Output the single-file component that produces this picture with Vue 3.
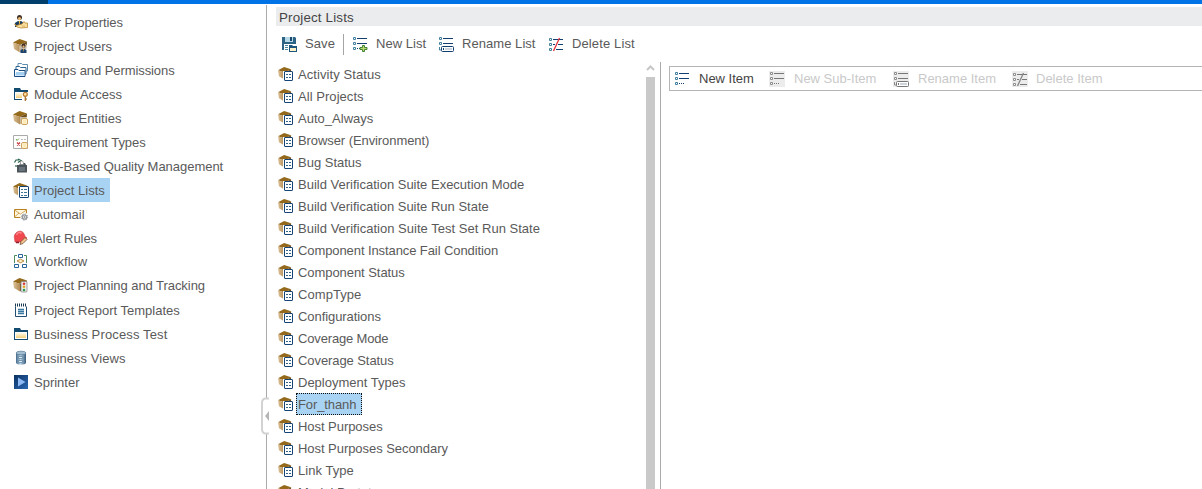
<script setup>
const nav = [
  ['User Properties', 'user', 24, -0.1], ['Project Users', 'boxuser', 24], ['Groups and Permissions', 'groups', 24, -0.08],
  ['Module Access', 'access', 24, 0.05], ['Project Entities', 'entities', 24, 0.05], ['Requirement Types', 'req', 24, -0.05],
  ['Risk-Based Quality Management', 'risk', 24, -0.03], ['Project Lists', 'boxlist', 24], ['Automail', 'mail', 24],
  ['Alert Rules', 'alert', 24, -0.05], ['Workflow', 'flow', 22], ['Project Planning and Tracking', 'plan', 26, -0.06],
  ['Project Report Templates', 'report', 24], ['Business Process Test', 'folder', 24, 0.14],
  ['Business Views', 'db', 24, 0.05], ['Sprinter', 'sprint', 24],
]
const lists = [['Activity Status', 0.08], ['All Projects', 0.05], ['Auto_Always', 0.02], ['Browser (Environment)', -0.08], ['Bug Status'],
  ['Build Verification Suite Execution Mode'], ['Build Verification Suite Run State'],
  ['Build Verification Suite Test Set Run State', 0.02], ['Component Instance Fail Condition', -0.09], ['Component Status', -0.06],
  ['CompType', 0.06], ['Configurations', -0.07], ['Coverage Mode', -0.16], ['Coverage Status', -0.08], ['Deployment Types'], ['For_thanh', -0.1],
  ['Host Purposes', -0.05], ['Host Purposes Secondary', -0.05], ['Link Type', 0.05], ['Model Prototype']]
</script>

<template>
  <div class="page">
    <svg class="defs" width="0" height="0">
      <defs>
        <linearGradient id="gold" x1="0" y1="0" x2="0" y2="1"><stop offset="0" stop-color="#fffbe8" /><stop offset="1" stop-color="#f3cf7a" /></linearGradient>
        <linearGradient id="navy" x1="0" y1="0" x2="1" y2="1"><stop offset="0" stop-color="#0a3160" /><stop offset="1" stop-color="#2a68b4" /></linearGradient>
        <linearGradient id="steel"><stop offset="0" stop-color="#456a8b" /><stop offset=".45" stop-color="#b9d4e6" /><stop offset="1" stop-color="#36597a" /></linearGradient>
        <linearGradient id="wood"><stop offset="0" stop-color="#dcc196" /><stop offset="1" stop-color="#b28c55" /></linearGradient>
        <symbol id="box" viewBox="0 0 16 16">
          <path d="M0 4.500 6.500 1 14 3.500 7 7z" fill="#94691c" />
          <path d="M0 4.500 7 7v7.500L1 11z" fill="url(#wood)" />
          <path d="m7 7 7-3.500-.5 7L7 14.500z" fill="#6f4e1c" />
        </symbol>
        <symbol id="boxlist" viewBox="0 0 16 16">
          <use href="#box" width="16" height="16" />
          <path d="M5 4h11v12H5z" fill="#fff" />
          <rect x="6.500" y="4.500" width="9" height="11" rx=".5" fill="#fff" stroke="#154474" />
          <path d="M8 7.500h2m1 0h3M8 10.500h2m1 0h3M8 13.500h2m1 0h3" stroke="#3d7596" />
        </symbol>
        <symbol id="rowbox" viewBox="0 0 16 16">
          <use href="#box" width="15" height="15" />
          <path d="M5 5h9v10H5z" fill="#fff" />
          <rect x="6.500" y="5.500" width="8" height="9" rx=".5" fill="#fff" stroke="#154474" />
          <path d="M8 8.500h2m1 0h2M8 11.500h2m1 0h2" stroke="#2f6488" />
        </symbol>
        <symbol id="boxuser" viewBox="0 0 16 16">
          <use href="#box" width="16" height="16" />
          <path d="M6.500 15V8l2-2h4l2 2v7z" fill="#fff" opacity=".6" />
          <circle cx="10.500" cy="7.800" r="2" fill="#3c2a1b" /><circle cx="10.500" cy="8.600" r="1.100" fill="#e7b780" />
          <path d="M7.500 15v-3l2-1h2l2 1v3z" fill="#1c446c" /><path d="m10 11 .5 3 .5-3z" fill="#efb03b" />
        </symbol>
        <symbol id="user" viewBox="0 0 16 16">
          <circle cx="6.500" cy="3.500" r="2.500" fill="#3d3024" /><circle cx="6.500" cy="4.600" r="1.600" fill="#e9b671" />
          <path d="M2 13V9l3-2h3l3 2v4z" fill="#173c63" /><path d="m5.700 7 .8 5 .8-5z" fill="#efb83f" />
          <path d="m1.500 10 2 1.500L9 10l2-2.500 1 1.500h2.500v4.500L8 14l-4-1z" fill="#f9dd9c" stroke="#bd8a32" stroke-width=".8" /><path d="m9 12 3 .2" stroke="#d6ab61" stroke-width=".8" />
        </symbol>
        <symbol id="groups" viewBox="0 0 16 16">
          <path d="M5 7V1.500h3.500l1 1H14.500V9h-2" fill="#fff" stroke="#5f8dae" />
          <path d="M3 9V4.500h3.500l1 1H13V12h-2" fill="#fff" stroke="#2e6795" />
          <path d="M1.500 14.500v-7H5l1 1h6v6z" fill="#fff" stroke="#174d84" /><path d="M3 10h8v3.500H2.500z" fill="#a5d0f0" />
        </symbol>
        <symbol id="folder" viewBox="0 0 16 16">
          <path d="M1 2h6l1 2h7v10H1z" fill="#124a70" /><path d="M2 6h12v7H2z" fill="#fff" /><path d="M3 7h10v5H3z" fill="url(#gold)" />
        </symbol>
        <symbol id="access" viewBox="0 0 16 16">
          <use href="#folder" width="16" height="16" />
          <path d="M9 6h7v10H9z" fill="#fff" /><circle cx="12.300" cy="8.300" r="2" fill="#ffe0a2" stroke="#b67b30" stroke-width="1.200" />
          <path d="M12.300 10.500V15m0-2h1.500" stroke="#a8702a" stroke-width="1.300" />
        </symbol>
        <symbol id="tag" viewBox="0 0 16 16"><rect x="8.500" y="8.500" width="6" height="6" rx="1.500" fill="#fff5dc" stroke="#cda35b" /><path d="M10 9.500h3v4h-3z" fill="#ffe9b5" /></symbol>
        <symbol id="entities" viewBox="0 0 16 16">
          <use href="#box" width="16" height="16" /><path d="M7 7h9v9H7z" fill="#fff" opacity=".6" /><use href="#tag" width="16" height="16" />
        </symbol>
        <symbol id="req" viewBox="0 0 16 16">
          <path d="M.5 1.500h14v13H.5z" fill="#fff" stroke="#aaa" /><path d="m3 5 1 1.500 2-2" fill="none" stroke="#64a04a" /><path d="m4 8.500 3 3m0-3-3 3" stroke="#c23c43" stroke-width="1.200" /><path d="M8 5.500h5" stroke="#bbb" stroke-dasharray="2 1" /><use href="#tag" width="16" height="16" />
        </symbol>
        <symbol id="risk" viewBox="0 0 16 16">
          <path d="M4 7h2l2-2h4l1 2h1v7.500H4z" fill="#4c545b" /><path d="M6 9h6v4H6z" fill="#69737b" /><path d="M1.500 4.500 3 2h3M5 1l3 1.500L5 4.500M3 7v2" fill="none" stroke="#27634b" stroke-width="1.200" /><path d="M7.500 6.500V3h2l1 2v1.500z" fill="#fff" stroke="#777" stroke-width=".6" />
        </symbol>
        <symbol id="mail" viewBox="0 0 16 16">
          <path d="M1.500 3.500h12v8h-12z" fill="#fff8df" stroke="#b98122" /><path d="m1.500 4 6 4 6-4M1.500 11 6 7" fill="none" stroke="#cf9d4d" stroke-width=".9" /><circle cx="11.500" cy="11" r="4.200" fill="#fff" /><circle cx="11.500" cy="11" r="2.200" fill="#eee" stroke="#92979b" stroke-width="1.300" /><circle cx="11.500" cy="11" r="3.200" fill="none" stroke="#92979b" stroke-dasharray="1.200 1.300" /><circle cx="11.500" cy="11" r=".8" fill="#777" />
        </symbol>
        <symbol id="alert" viewBox="0 0 16 16">
          <path d="M2 12c0-3-2-6 1-9s7-2 8 1c1 2 1 3 3 4l-4 4z" fill="#f0484d" stroke="#c93b44" stroke-width=".7" /><path d="M3.500 5c1-3 4-3 5-1.500" fill="none" stroke="#ff858c" stroke-width="1.500" /><path d="M3 12.500h3" stroke="#84212c" stroke-width="1.500" /><path d="m7 14.500 1-3 4-4 2 2-4 4z" fill="#f0c28a" stroke="#755239" stroke-width=".8" />
        </symbol>
        <symbol id="flow" viewBox="0 0 16 16">
          <path d="M5.500 1.500h4v3h-4zM1.500 11.500h4v3h-4zm8 0h4v3h-4z" fill="#fff" stroke="#286596" /><path d="m4 8 3.500-1.800L11 8 7.500 9.800z" fill="#fff1c7" stroke="#b98b43" /><path d="M4 2.500H1.500V10M11 2.500h2.500V10" fill="none" stroke="#4c8e5b" />
        </symbol>
        <symbol id="plan" viewBox="0 0 16 16">
          <use href="#box" width="16" height="16" /><rect x="8" y="4.500" width="6" height="10.500" rx="1" fill="#eee" stroke="#888" stroke-width=".8" /><circle cx="11" cy="6.700" r="1.300" fill="#d9393c" /><circle cx="11" cy="9.800" r="1.300" fill="#e6a41c" /><circle cx="11" cy="13" r="1.300" fill="#2b9c4b" />
        </symbol>
        <symbol id="report" viewBox="0 0 16 16">
          <path d="M2.500 3.500h11v11h-11z" fill="#fff" stroke="#244d72" /><path d="M2 1h12v3.500H2z" fill="#fff" /><path d="M2.500 1.500v3m2-3v3m2-3v3m2-3v3m2-3v3m2-3v3" stroke="#193955" /><path d="M5 7.500h6m-6 2h6m-6 2h6" stroke="#3979a3" stroke-width="1.300" />
        </symbol>
        <symbol id="db" viewBox="0 0 16 16">
          <path d="M3 3v9.500c0 3 10 3 10 0V3z" fill="url(#steel)" /><ellipse cx="8" cy="3" rx="5" ry="1.800" fill="#a3bed0" stroke="#537690" stroke-width=".7" /><path d="M5.500 6.500h4v2h-4zm0 4h4v2h-4z" fill="#dceaf3" stroke="#6387a2" stroke-width=".8" />
        </symbol>
        <symbol id="sprint" viewBox="0 0 16 16"><path d="M1 1h14v14H1z" fill="url(#navy)" /><path d="m5 3.500 7.500 4.500L5 12.500z" fill="#8eb9f5" /></symbol>
        <symbol id="save" viewBox="0 0 16 16">
          <path d="M1 1h13l1 1v12H1z" fill="#2d6384" /><path d="M4 1h8v5H4z" fill="#b8d9e7" /><path d="M9 1h2v4H9z" fill="#194a70" /><path d="M3 8h11v7H3z" fill="#fff" /><path d="M4 9.500h6m-6 2h3m-3 2h3" stroke="#49839e" /><path d="M7 8h9v8H7z" fill="#fff" /><path d="M8 9h3l1 1h4v6H8z" fill="#1c567e" /><path d="M9 12h6v3H9z" fill="#fff2c9" />
        </symbol>
        <symbol id="rows" viewBox="0 0 16 16">
          <path d="M1.500 1.500h2v2h-2zm0 5h2v2h-2z" fill="#fff" stroke="var(--sq)" /><path d="M5 2.500h10M5 7.500h10" stroke="var(--ln)" />
        </symbol>
        <symbol id="item" viewBox="0 0 16 16"><use href="#rows" width="16" height="16" /><path d="M1.500 11.500h2v2h-2z" fill="#fff" stroke="var(--sq)" /><path d="M5 12.500h1m1 0h1m1 0h1" stroke="var(--ln)" /></symbol>
        <symbol id="new" viewBox="0 0 16 16"><use href="#item" width="16" height="16" /><path d="M10.500 9.500h2v2H15v2h-2.500v2h-2v-2H8v-2h2.500z" fill="#b8d976" stroke="#45822f" /></symbol>
        <symbol id="rename" viewBox="0 0 16 16"><use href="#rows" width="16" height="16" /><path d="M1.500 11v3H3" fill="none" stroke="var(--sq)" /><rect x="3.500" y="10.500" width="12" height="5" rx="1" fill="#fff" stroke="var(--ln)" /><path d="M5.500 12v2" stroke="var(--ln)" /><path d="M7 13h7" stroke="#cdd4dc" stroke-width="2" /></symbol>
        <symbol id="delete" viewBox="0 0 16 16"><path d="M1.500 2.500h2v2h-2zm0 5h2v2h-2zm0 5h2v2h-2z" fill="#fff" stroke="var(--sq)" /><path d="M5 3.500h10M5 8.500h2m3 0h5M8 13.500h7" stroke="var(--ln)" /><path d="M11.500 2 5.500 15" stroke="var(--cut)" stroke-width="1.300" /></symbol>
      </defs>
    </svg>
    <header class="top"><i></i></header>
    <div class="body">
      <nav class="side">
        <div v-for="n in nav" :key="n[0]" class="nav" :style="{ height: n[2] + 'px' }">
          <svg class="ic"><use :href="'#' + n[1]" /></svg><span :class="{ sel: n[1] === 'boxlist' }" :style="{ letterSpacing: (n[3] || 0) + 'px' }">{{ n[0] }}</span>
        </div>
      </nav>
      <main class="main">
        <h1>Project Lists</h1>
        <div class="tools">
          <svg class="ic"><use href="#save" /></svg><span class="t1">Save</span><b class="sep"></b>
          <svg class="ic"><use href="#new" /></svg><span class="t2">New List</span>
          <svg class="ic"><use href="#rename" /></svg><span class="t3">Rename List</span>
          <svg class="ic"><use href="#delete" /></svg><span class="t4">Delete List</span>
        </div>
        <div class="panes">
          <div class="list">
            <div v-for="l in lists" :key="l[0]" class="row">
              <svg class="ic"><use href="#rowbox" /></svg><span :class="{ focus: l[0] === 'For_thanh' }" :style="{ letterSpacing: (l[1] || 0) + 'px' }">{{ l[0] }}</span>
            </div>
          </div>
          <div class="scroll"><svg width="9" height="6"><path d="M1 5 4.500 1.500 8 5" fill="none" stroke="#c6c6c6" stroke-width="2" /></svg><i></i></div>
          <section class="detail">
            <div class="itembar">
              <svg class="ic"><use href="#item" /></svg><span class="i1">New Item</span>
              <svg class="ic off"><use href="#item" /></svg><span class="i2 dim">New Sub-Item</span>
              <svg class="ic off"><use href="#rename" /></svg><span class="i3 dim">Rename Item</span>
              <svg class="ic off"><use href="#delete" /></svg><span class="i4 dim">Delete Item</span>
            </div>
          </section>
        </div>
      </main>
      <svg class="handle" width="10" height="38"><path d="M9 1.500H5.500Q2 2 2 6v26q0 4 3.500 4.500H9" fill="#fff" stroke="#d2d2d2" stroke-width="2" /><path d="M9 14v10l-4-5z" fill="#b5b5b5" /></svg>
    </div>
  </div>
</template>

<style>
html, body { margin: 0; overflow: hidden; background: #fff; }
</style>
<style scoped>
.page { width: 1202px; height: 489px; overflow: hidden; background: #fff; font: 13px/20px "Liberation Sans", Arial, sans-serif; color: #5a5a5a; white-space: nowrap; display: flex; flex-direction: column; --sq: #43809f; --ln: #123f70; --cut: #e0303d; }
.defs { position: absolute; }
.top { height: 4px; flex: none; background: #0073e7; }
.top i { display: block; width: 48px; height: 4px; background: #003e6b; }
.body { flex: 1; min-height: 0; display: flex; position: relative; }
.ic { width: 16px; height: 16px; flex: none; }
.side { width: 266px; flex: none; box-sizing: border-box; padding: 6px 0 0 13px; }
.nav { display: flex; align-items: center; }
.nav span { margin-left: 3px; padding: 2px 5px 0 2px; line-height: 22px; }
.nav .sel { background: #a9d3f3; }
.main { flex: 1; min-width: 0; margin-top: 1px; border-left: 1px solid #aaa; display: flex; flex-direction: column; }
h1 { margin: 2px 0 0 9px; padding-left: 3px; height: 19px; line-height: 21px; font-size: 13.330px; font-weight: 400; color: #444; background: #ebecee; letter-spacing: .18px; flex: none; }
.tools { height: 36px; flex: none; display: flex; align-items: center; padding-left: 14px; letter-spacing: .05px; }
.tools span { margin-left: 8px; flex: none; }
.tools .t1 { width: 38px; letter-spacing: .1px; }
.tools .sep { width: 1px; height: 21px; background: #a5a5a5; margin-right: 8px; }
.t2 { width: 62px; }
.t3 { width: 86px; }
.tools .t4 { letter-spacing: .12px; }
.panes { flex: 1; min-height: 0; display: flex; }
.list { width: 379px; flex: none; overflow: hidden; padding-top: 1px; }
.row { display: flex; align-items: center; height: 22px; padding-left: 11px; }
.row span { margin-left: 2px; padding: 2px 5px 0 1px; line-height: 18px; border: 1px dotted transparent; }
.row .focus { background: #a9d3f3; border-color: #111; }
.scroll { width: 9px; flex: none; padding-top: 3px; display: flex; flex-direction: column; }
.scroll svg { flex: none; }
.scroll i { margin-top: 6px; flex: 1; background: #c9c9c9; }
.detail { margin-left: 5px; flex: 1; border-left: 1px solid #aaa; padding: 4px 0 0 8px; }
.itembar { height: 23px; border: 1px solid #b5b5b5; border-right: 0; display: flex; align-items: center; padding-left: 4px; }
.itembar span { margin-left: 9px; flex: none; }
.itembar .i1 { width: 70px; color: #444; }
.i2 { width: 99px; }
.i3 { width: 94px; }
.itembar .i4 { margin-left: 8px; }
.dim { color: #c9c9c9; }
.off { background: #ececec; --sq: #8d8d8d; --ln: #777; --cut: #858585; }
.handle { position: absolute; left: 260px; top: 393px; }
</style>
